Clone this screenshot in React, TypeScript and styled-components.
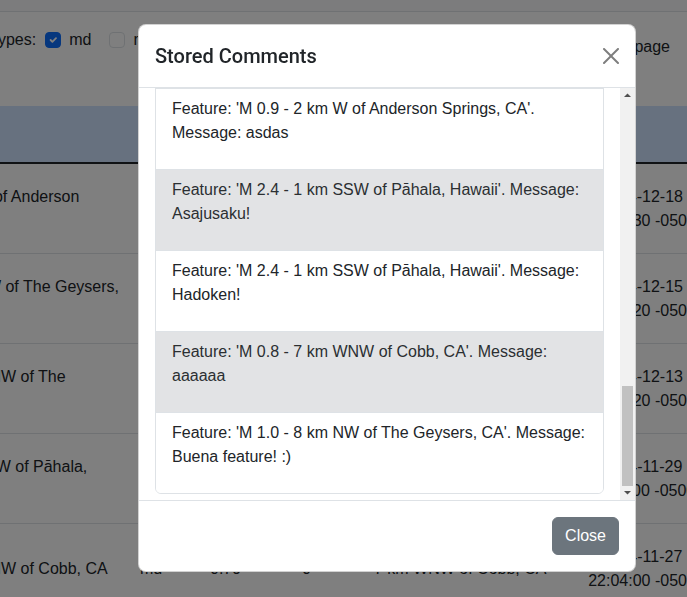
import React, { useLayoutEffect, useRef, useState } from "react";
import styled, { createGlobalStyle } from "styled-components";

const GlobalStyle = createGlobalStyle`
  *, *::before, *::after { box-sizing: border-box; }
  html, body { margin: 0; padding: 0; }
  body {
    font-family: "Liberation Sans", Arial, sans-serif;
    font-size: 16px;
    line-height: 1.5;
    color: #212529;
    background: #fff;
    overflow: hidden;
  }
`;

/* ---------- background page ---------- */

const Page = styled.div`
  width: 100vw;
  height: 100vh;
  overflow: hidden;
`;

const NavBar = styled.div`
  height: 12px;
  background: #f8f9fa;
  border-bottom: 1px solid #dee2e6;
`;

const Content = styled.div`
  margin-left: -127px;
  width: 839px;
`;

const FilterBar = styled.div`
  display: flex;
  align-items: flex-start;
  gap: 16px;
  margin: 16px 0 40px;
  padding-right: 42px;
`;

const SearchInput = styled.input`
  width: 100px;
  height: 38px;
  padding: 6px 12px;
  font: inherit;
  border: 1px solid #dee2e6;
  border-radius: 6px;
`;

const TypesGroup = styled.div`
  display: flex;
  align-items: center;
  gap: 9px;
  line-height: 24px;
`;

const CheckItem = styled.label`
  display: flex;
  align-items: center;
  gap: 8px;
  & + & {
    margin-left: 9px;
  }
`;

const CheckBox = styled.span<{ $checked?: boolean }>`
  width: 16px;
  height: 16px;
  border-radius: 4px;
  display: flex;
  align-items: center;
  justify-content: center;
  background: ${(p) => (p.$checked ? "#0d6efd" : "#fff")};
  border: 1px solid ${(p) => (p.$checked ? "#0d6efd" : "#dee2e6")};
`;

const PageGroup = styled.div`
  margin-left: auto;
  display: flex;
  align-items: center;
  gap: 8px;
  height: 38px;
`;

const PageSelect = styled.div`
  height: 38px;
  width: 72px;
  padding: 6px 12px;
  border: 1px solid #dee2e6;
  border-radius: 6px;
  background: #fff;
`;

const Table = styled.table`
  width: 839px;
  table-layout: fixed;
  border-collapse: separate;
  border-spacing: 0;
`;

const HeadCell = styled.th`
  background: #cfe2ff;
  padding: 16px 8px;
  text-align: left;
  font-weight: 700;
  line-height: 24px;
  border-bottom: 2px solid #212529;
`;

const Row = styled.tr`
  height: 90px;
`;

const Cell = styled.td<{ $center?: boolean }>`
  padding: 8px;
  vertical-align: middle;
  line-height: 24px;
  border-bottom: 1px solid #dee2e6;
  text-align: ${(p) => (p.$center ? "center" : "left")};
`;

/* ---------- modal ---------- */

const Overlay = styled.div`
  position: fixed;
  inset: 0;
  background: rgba(0, 0, 0, 0.5);
`;

const Dialog = styled.div`
  margin: 24px 0 0 138px;
  width: 498px;
  height: 548px;
  display: flex;
  flex-direction: column;
  background: #fff;
  border: 1px solid rgba(0, 0, 0, 0.175);
  border-radius: 8px;
  overflow: hidden;
`;

const Header = styled.div`
  display: flex;
  align-items: center;
  padding: 16px;
  border-bottom: 1px solid #dee2e6;
`;

const Title = styled.h5`
  margin: 0;
  font-family: Roboto, "Liberation Sans", sans-serif;
  font-size: 20px;
  font-weight: 500;
  line-height: 30px;
  color: #212529;
`;

const CloseX = styled.button`
  margin: -8px -4px -8px auto;
  width: 24px;
  height: 24px;
  padding: 4px;
  border: 0;
  background: transparent;
  opacity: 0.5;
  display: flex;
`;

const Body = styled.div`
  flex: 1;
  min-height: 0;
  display: flex;
`;

const ScrollArea = styled.div`
  flex: 1;
  min-width: 0;
  overflow: hidden;
  padding: 16px;
`;

const ScrollBar = styled.div`
  width: 15px;
  flex: none;
  display: flex;
  flex-direction: column;
  background: #f1f1f1;
`;

const ArrowButton = styled.div`
  height: 15px;
  flex: none;
  display: flex;
  align-items: center;
  justify-content: center;
`;

const Track = styled.div`
  flex: 1;
  min-height: 0;
  display: flex;
  flex-direction: column;
  align-items: center;
`;

const Thumb = styled.div`
  width: 11px;
  flex: none;
  background: #c1c1c1;
`;

const ListGroup = styled.div`
  border: 1px solid #dee2e6;
  border-radius: 6px;
  overflow: hidden;
`;

const ListItem = styled.div<{ $muted?: boolean }>`
  padding: 8px 16px;
  background: ${(p) => (p.$muted ? "#e2e3e5" : "#fff")};
  color: ${(p) => (p.$muted ? "#2b2f32" : "#212529")};
  & + & {
    border-top: 1px solid #dee2e6;
  }
`;

const ItemText = styled.p`
  margin: 0 0 16px;
`;

const Footer = styled.div`
  display: flex;
  justify-content: flex-end;
  padding: 12px;
  border-top: 1px solid #dee2e6;
`;

const SecondaryButton = styled.button`
  margin: 4px;
  padding: 6px 12px;
  font: inherit;
  line-height: 24px;
  color: #fff;
  background: #6c757d;
  border: 1px solid #6c757d;
  border-radius: 6px;
`;

/* ---------- data ---------- */

const rows = [
  {
    title: "M 0.9 - 2 km W of Anderson Springs, CA",
    type: "md",
    mag: "0.90",
    tsunami: "0",
    place: "2 km W of Anderson Springs, CA",
    date: "2024-12-18",
    time: "09:41:30 -0500",
  },
  {
    title: "M 1.0 - 8 km NW of The Geysers, CA",
    type: "md",
    mag: "1.00",
    tsunami: "0",
    place: "8 km NW of The Geysers, CA",
    date: "2024-12-15",
    time: "17:12:20 -0500",
  },
  {
    title: "M 0.6 - 6 km WNW of The Geysers, CA",
    type: "md",
    mag: "0.60",
    tsunami: "0",
    place: "6 km WNW of The Geysers, CA",
    date: "2024-12-13",
    time: "03:55:20 -0500",
  },
  {
    title: "M 2.4 - 1 km SSW of Pāhala, Hawaii",
    type: "md",
    mag: "2.40",
    tsunami: "0",
    place: "1 km SSW of Pāhala, Hawaii",
    date: "2024-11-29",
    time: "11:30:00 -0500",
  },
  {
    title: "M 0.8 - 7 km WNW of Cobb, CA",
    type: "md",
    mag: "0.79",
    tsunami: "0",
    place: "7 km WNW of Cobb, CA",
    date: "2024-11-27",
    time: "22:04:00 -0500",
  },
];

const comments: { feature: string; message: string }[] = [
  { feature: "M 1.2 - 3 km N of The Geysers, CA", message: "Primer comentario" },
  { feature: "M 0.5 - 4 km E of Cobb, CA", message: "test" },
  { feature: "M 2.1 - 10 km S of Volcano, Hawaii", message: "Interesante" },
  { feature: "M 0.9 - 2 km W of Anderson Springs, CA", message: "hola" },
  { feature: "M 1.0 - 8 km NW of The Geysers, CA", message: "prueba 2" },
  { feature: "M 0.8 - 7 km WNW of Cobb, CA", message: "ok" },
  { feature: "M 2.4 - 1 km SSW of Pāhala, Hawaii", message: "Temblor!" },
  { feature: "M 1.5 - 5 km SE of Maacama, CA", message: "qwerty" },
  { feature: "M 0.6 - 6 km WNW of The Geysers, CA", message: "asd" },
  { feature: "M 3.0 - 20 km SW of Leilani Estates, Hawaii", message: "Fuerte" },
  { feature: "M 0.7 - 1 km NNE of The Geysers, CA", message: "comentario" },
  { feature: "M 1.1 - 9 km NW of Cobb, CA", message: "bien" },
  { feature: "M 0.9 - 2 km W of Anderson Springs, CA", message: "nuevo" },
  { feature: "M 2.0 - 4 km S of Fern Forest, Hawaii", message: "xd" },
  { feature: "M 1.0 - 8 km NW of The Geysers, CA", message: "Hola mundo" },
  { feature: "M 0.9 - 2 km W of Anderson Springs, CA", message: "asdas" },
  { feature: "M 2.4 - 1 km SSW of Pāhala, Hawaii", message: "Asajusaku!" },
  { feature: "M 2.4 - 1 km SSW of Pāhala, Hawaii", message: "Hadoken!" },
  { feature: "M 0.8 - 7 km WNW of Cobb, CA", message: "aaaaaa" },
  { feature: "M 1.0 - 8 km NW of The Geysers, CA", message: "Buena feature! :)" },
];

const CheckIcon = () => (
  <svg width="12" height="12" viewBox="0 0 20 20" fill="none">
    <path d="M6 10l3 3 6-6" stroke="#fff" strokeWidth="3" strokeLinecap="round" strokeLinejoin="round" />
  </svg>
);

const XIcon = () => (
  <svg width="16" height="16" viewBox="0 0 16 16" fill="#000">
    <path d="M.293.293a1 1 0 0 1 1.414 0L8 6.586 14.293.293a1 1 0 1 1 1.414 1.414L9.414 8l6.293 6.293a1 1 0 0 1-1.414 1.414L8 9.414l-6.293 6.293a1 1 0 0 1-1.414-1.414L6.586 8 .293 1.707a1 1 0 0 1 0-1.414" />
  </svg>
);

const ArrowIcon = ({ down }: { down?: boolean }) => (
  <svg width="15" height="15" viewBox="0 0 15 15">
    <polygon points={down ? "4,6 7.5,9.5 11,6" : "4,9 7.5,5.5 11,9"} fill="#505050" />
  </svg>
);

export default function App() {
  const areaRef = useRef<HTMLDivElement>(null);
  const trackRef = useRef<HTMLDivElement>(null);
  const [thumb, setThumb] = useState({ top: 0, height: 0 });

  useLayoutEffect(() => {
    const el = areaRef.current;
    const track = trackRef.current;
    if (!el || !track) return;
    const max = el.scrollHeight - el.clientHeight;
    const top = Math.max(0, max - 10);
    el.scrollTop = top;
    const len = track.clientHeight;
    const h = Math.max(18, Math.round((len * el.clientHeight) / el.scrollHeight));
    const t = max > 0 ? Math.round(((len - h) * top) / max) : 0;
    setThumb({ top: t + 3, height: h });
  }, []);

  return (
    <>
      <GlobalStyle />
      <Page>
        <NavBar />
        <Content>
          <FilterBar>
            <SearchInput placeholder="Search" readOnly />
            <TypesGroup>
              <span>Types:</span>
              <CheckItem>
                <CheckBox $checked>
                  <CheckIcon />
                </CheckBox>
                md
              </CheckItem>
              <CheckItem>
                <CheckBox />
                ml
              </CheckItem>
            </TypesGroup>
            <PageGroup>
              <PageSelect>5</PageSelect>
              <span>per page</span>
            </PageGroup>
          </FilterBar>
          <Table>
            <colgroup>
              <col style={{ width: 259 }} />
              <col style={{ width: 70 }} />
              <col style={{ width: 92 }} />
              <col style={{ width: 72 }} />
              <col style={{ width: 206 }} />
              <col style={{ width: 140 }} />
            </colgroup>
            <thead>
              <tr>
                <HeadCell>Title</HeadCell>
                <HeadCell>Type</HeadCell>
                <HeadCell>Mag</HeadCell>
                <HeadCell>Tsu</HeadCell>
                <HeadCell>Place</HeadCell>
                <HeadCell>Time</HeadCell>
              </tr>
            </thead>
            <tbody>
              {rows.map((r, i) => (
                <Row key={i}>
                  <Cell>{r.title}</Cell>
                  <Cell>{r.type}</Cell>
                  <Cell>{r.mag}</Cell>
                  <Cell>{r.tsunami}</Cell>
                  <Cell>{r.place}</Cell>
                  <Cell $center>
                    {r.date}
                    <br />
                    {r.time}
                  </Cell>
                </Row>
              ))}
            </tbody>
          </Table>
        </Content>
      </Page>

      <Overlay>
        <Dialog role="dialog" aria-modal="true">
          <Header>
            <Title>Stored Comments</Title>
            <CloseX aria-label="Close">
              <XIcon />
            </CloseX>
          </Header>
          <Body>
            <ScrollArea ref={areaRef}>
              <ListGroup>
                {comments.map((c, i) => (
                  <ListItem key={i} $muted={i % 2 === 0}>
                    <ItemText>
                      Feature: '{c.feature}'. Message: {c.message}
                    </ItemText>
                  </ListItem>
                ))}
              </ListGroup>
            </ScrollArea>
            <ScrollBar aria-hidden="true">
              <ArrowButton>
                <ArrowIcon />
              </ArrowButton>
              <Track ref={trackRef}>
                <Thumb style={{ marginTop: thumb.top, height: thumb.height }} />
              </Track>
              <ArrowButton>
                <ArrowIcon down />
              </ArrowButton>
            </ScrollBar>
          </Body>
          <Footer>
            <SecondaryButton>Close</SecondaryButton>
          </Footer>
        </Dialog>
      </Overlay>
    </>
  );
}
